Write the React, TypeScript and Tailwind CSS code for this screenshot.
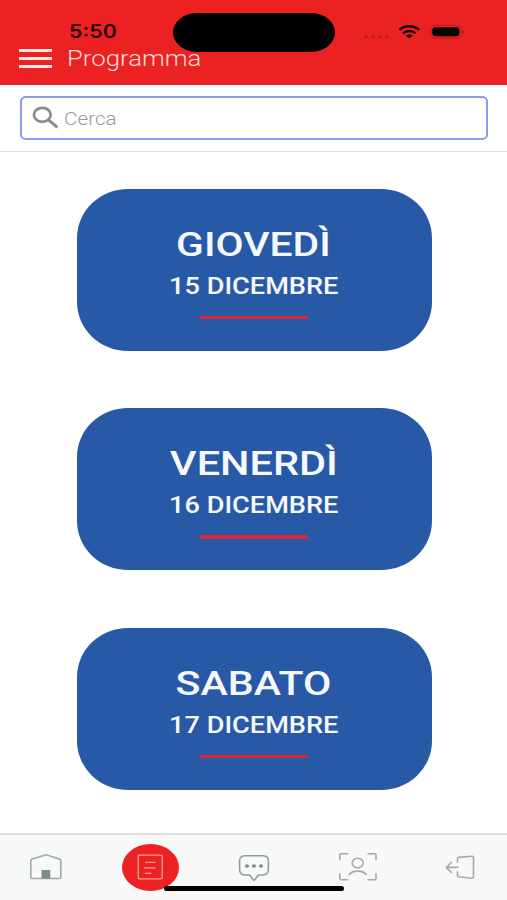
import { clsx } from 'clsx';

interface DayCardProps {
  day: string;
  date: string;
  dayScale: string;
}

const days: DayCardProps[] = [
  { day: 'GIOVEDÌ', date: '15 DICEMBRE', dayScale: 'scale-x-[1.2]' },
  { day: 'VENERDÌ', date: '16 DICEMBRE', dayScale: 'scale-x-[1.22]' },
  { day: 'SABATO', date: '17 DICEMBRE', dayScale: 'scale-x-[1.21]' },
];

function StatusBar() {
  return (
    <div className="relative h-[45px]">
      <span className="absolute left-[69px] top-[20px] origin-left scale-x-[1.19] font-['Inter'] text-[18px] leading-[24px] font-semibold text-[#2b0303]">
        5:50
      </span>

      {/* Dynamic island */}
      <div className="absolute left-[173px] top-[13px] z-10 h-[39px] w-[162px] rounded-[24px/19.5px] bg-black" />

      {/* Signal, wifi, battery */}
      <svg className="absolute left-[360px] top-[20px]" width="110" height="24" viewBox="360 20 110 24">
        <g fill="#bd1a1a">
          <ellipse cx="366" cy="36.5" rx="2" ry="1.5" />
          <ellipse cx="373" cy="36.5" rx="2" ry="1.5" />
          <ellipse cx="380" cy="36.5" rx="2" ry="1.5" />
          <ellipse cx="387" cy="36.5" rx="2" ry="1.5" />
        </g>
        <g fill="none" stroke="#160202" strokeWidth="2.5">
          <path d="M399.4 29.9C404.8 25 413.8 25 419.2 29.9" />
          <path d="M403 33.3C406.5 30.1 412.1 30.1 415.6 33.3" />
        </g>
        <path d="M405.8 35.6Q409.3 32.8 412.8 35.6L409.3 38.6Z" fill="#160202" />
        <rect x="430.3" y="25.5" width="31" height="12.6" rx="4.6" fill="none" stroke="#b81a1a" />
        <rect x="432.3" y="27.3" width="27" height="9" rx="3" fill="#000" />
        <path d="M463 29.8Q465.6 31.8 463 33.8Z" fill="#a81717" />
      </svg>
    </div>
  );
}

function Header() {
  return (
    <header className="h-[85px] shrink-0 bg-[#ec2222]">
      <StatusBar />
      <div className="flex h-[27px] items-center pl-[19px]">
        <button className="flex w-[33px] flex-col gap-[4.5px]">
          <span className="h-[3.3px] w-full bg-[#ffe9e7]" />
          <span className="h-[3.3px] w-full bg-[#ffe9e7]" />
          <span className="h-[3.3px] w-full bg-[#ffe9e7]" />
        </button>
        <h1 className="ml-[14.5px] origin-left scale-x-[1.17] font-['Roboto'] text-[22px] leading-[27px] font-light text-[#ffdcda]">
          Programma
        </h1>
      </div>
    </header>
  );
}

function SearchBar() {
  return (
    <div className="h-[67px] shrink-0 border-b border-[#dedede] px-[20px] pt-[11px]">
      <div className="flex h-[44px] w-[468px] items-center rounded-[6px/5px] border-2 border-[#8b9bee] bg-white pl-[9.5px]">
        <svg width="28" height="24" viewBox="0 0 28 24" fill="none" stroke="#8b8b8b">
          <ellipse cx="10.3" cy="8.8" rx="8.4" ry="7" strokeWidth="2.7" />
          <path d="M16.5 13.8L25.4 21.4" strokeWidth="3" />
        </svg>
        <span className="ml-[4px] origin-left translate-y-[1px] scale-x-[1.15] font-['Roboto'] text-[18px] leading-[24px] font-light text-[#999999]">
          Cerca
        </span>
      </div>
    </div>
  );
}

function DayCard({ day, date, dayScale }: DayCardProps) {
  return (
    <button className="flex h-[162px] w-[355px] flex-col items-center rounded-[51px/49px] bg-[#2859a6] pt-[35px] pr-[1px] font-['Roboto'] font-medium text-[#f5f8ff]">
      <span className={clsx('text-[34px] leading-[40px]', dayScale)}>{day}</span>
      <span className="mt-[9px] scale-x-[1.18] text-[23px] leading-[28px]">{date}</span>
      <span className="mt-[15px] h-[3.5px] w-[108px] bg-[#d8283a]" />
    </button>
  );
}

function NavBar() {
  return (
    <nav className="relative h-[67px] shrink-0 border-t-2 border-[#dfe0e0] bg-[#f7f8f8]">
      <div className="-mx-[6px] flex h-[64px] items-center">
        {/* Home */}
        <button className="flex w-[104px] shrink-0 justify-center">
          <svg width="36" height="32" viewBox="28 851 36 32" fill="none" stroke="#a0a8a8" strokeWidth="1.6">
            <path d="M30.8 877V861Q30.8 859.6 32.2 859L46 854.8L59.3 859Q60.8 859.6 60.8 861V876.8Q60.8 878.5 59 878.5H32.4Q30.8 878.5 30.8 877Z" />
            <rect x="41.5" y="870" width="8.8" height="8.5" fill="#7f8c8c" stroke="none" />
          </svg>
        </button>

        {/* Programma */}
        <button className="flex w-[104px] shrink-0 justify-center">
          <span className="flex h-[47px] w-[57px] items-center justify-center rounded-[50%] bg-[#ec2222]">
            <svg width="26" height="26" viewBox="137 854.5 26 26" fill="none" stroke="#ff9c96" strokeWidth="1.3">
              <rect x="138.2" y="855.7" width="24" height="23.7" rx="1.4" />
              <path d="M145 862.9H155.5M144 868.4H155.5M145 873.9H151.5" />
            </svg>
          </span>
        </button>

        {/* Chat */}
        <button className="flex w-[104px] shrink-0 justify-center">
          <svg width="36" height="32" viewBox="236 851 36 32" fill="none" stroke="#949c9c" strokeWidth="1.6">
            <path d="M245.5 855.7H262.5Q268.4 855.7 268.4 860.7V869.5Q268.4 874.8 263 875H259.5Q258.3 875 257.6 876L254.8 879.8Q254 880.7 253.2 879.8L250.4 876Q249.7 875 248.5 875H245Q239.6 874.8 239.6 869.5V860.7Q239.6 855.7 245.5 855.7Z" />
            <g fill="#7f8787" stroke="none">
              <ellipse cx="247" cy="866" rx="2" ry="1.7" />
              <ellipse cx="254" cy="866" rx="2" ry="1.7" />
              <ellipse cx="261" cy="866" rx="2" ry="1.7" />
            </g>
          </svg>
        </button>

        {/* Profile scan */}
        <button className="flex w-[104px] shrink-0 justify-center">
          <svg width="42" height="32" viewBox="337 851 42 32" fill="none" stroke="#a6a8aa" strokeWidth="1.6">
            <path d="M348.3 853.8H341Q339.8 853.8 339.8 855V860.3M367.5 853.8H374.7Q376 853.8 376 855V860.3M339.8 873.3V878.5Q339.8 879.7 341 879.7H348.3M376 873.3V878.5Q376 879.7 374.7 879.7H367.5" />
            <ellipse cx="357.7" cy="863" rx="5.5" ry="4.7" />
            <path d="M349 875C352 869.8 363.5 869.8 366.6 875" />
          </svg>
        </button>

        {/* Logout */}
        <button className="flex w-[104px] shrink-0 justify-center">
          <svg width="36" height="32" viewBox="444 851 36 32" fill="none" stroke="#a6a8aa" strokeWidth="1.6">
            <path d="M457.5 862.7V858.7Q457.5 857.6 458.8 857.4L471.5 856.2Q473.5 856 473.5 857.7V876.3Q473.5 878.4 471.5 878.2L458.8 876.8Q457.5 876.6 457.5 875.4V871.5" />
            <path d="M458.5 867.4H446.5M452 861.8L446.3 867.4L452 873" />
          </svg>
        </button>
      </div>

      {/* Home indicator */}
      <div className="absolute left-[164px] top-[51px] h-[5px] w-[180px] rounded-full bg-black" />
    </nav>
  );
}

export default function App() {
  return (
    <div className="flex h-[900px] w-[507px] flex-col overflow-hidden bg-white">
      <Header />
      <SearchBar />
      <main className="flex flex-1 flex-col items-center gap-[57.5px] pt-[36.5px] pl-[1px]">
        {days.map((item) => (
          <DayCard key={item.day} {...item} />
        ))}
      </main>
      <NavBar />
    </div>
  );
}
